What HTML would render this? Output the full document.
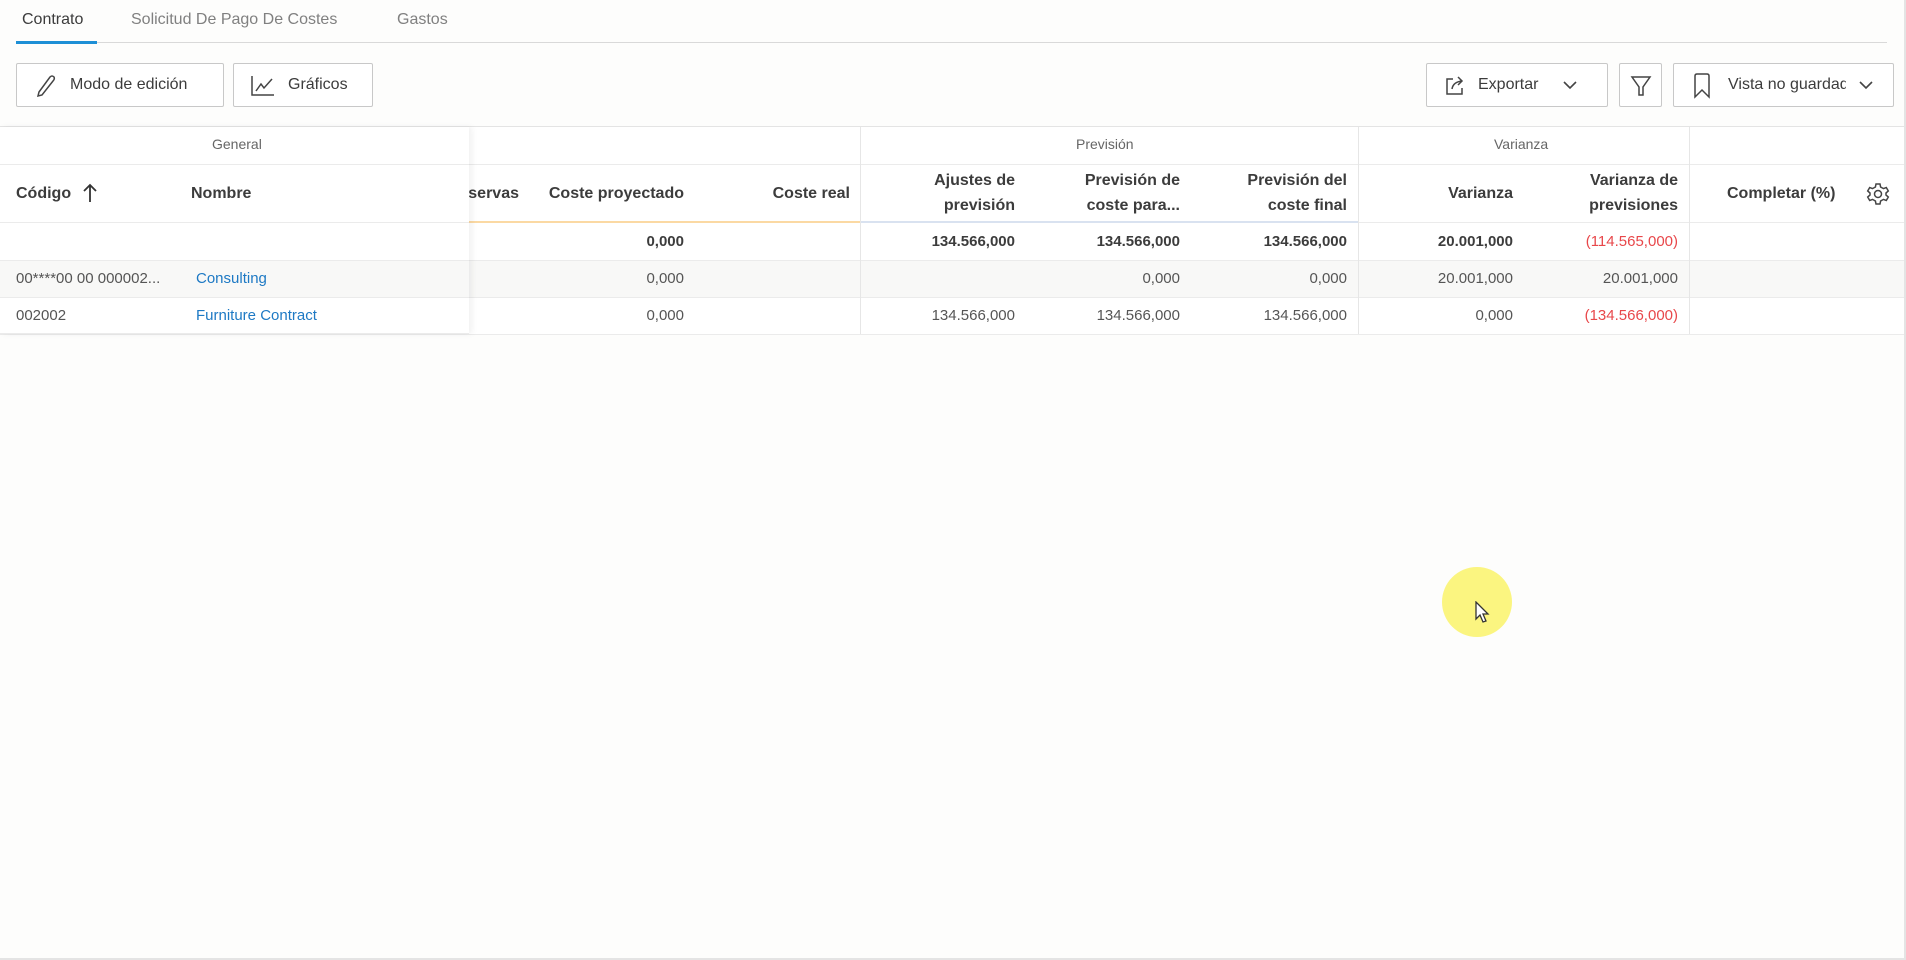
<!DOCTYPE html>
<html><head><meta charset="utf-8"><style>
*{box-sizing:border-box;margin:0;padding:0}
body{width:1906px;height:960px;background:#fdfdfc;font-family:"Liberation Sans",sans-serif;position:relative;overflow:hidden;color:#3c3c3c}
.a{position:absolute;white-space:nowrap}
.btn{position:absolute;top:63px;height:44px;border:1px solid #c8c8c8;background:#fff;border-radius:2px}
.btn span{position:absolute;top:12px;font-size:16px;color:#3c3c3c;white-space:nowrap}
.h{font-size:16px;font-weight:bold;color:#3c3c3c;text-align:right;line-height:25px}
.d{font-size:15px;color:#555;text-align:right}
.b{font-weight:bold;color:#3c3c3c}
.r{color:#e8474a}
.hl{position:absolute;height:1px;background:#ebebeb;left:0;width:1904px}
.vl{position:absolute;width:1px;background:#e6e6e6;top:127px;height:207px}
.g{font-size:14px;color:#666}
</style></head><body>
<!-- tabs -->
<div class="a" style="left:22px;top:11px;font-size:16px;color:#3c3c3c">Contrato</div>
<div class="a" style="left:131px;top:11px;font-size:16px;color:#808080">Solicitud De Pago De Costes</div>
<div class="a" style="left:397px;top:11px;font-size:16px;color:#808080">Gastos</div>
<div class="a" style="left:16px;top:42px;width:1871px;height:1px;background:#d9d9d9"></div>
<div class="a" style="left:16px;top:41px;width:81px;height:3px;background:#1d8fd6"></div>
<!-- buttons -->
<div class="btn" style="left:16px;width:208px">
<svg class="a" style="left:18px;top:10px" width="22" height="24" viewBox="0 0 22 24" fill="none" stroke="#444" stroke-width="1.5"><path d="M4 18 L15 3 Q17 1 19 3 Q20 5 18 7 L7 21 L3 22 Z"/></svg>
<span style="left:53px">Modo de edición</span></div>
<div class="btn" style="left:233px;width:140px">
<svg class="a" style="left:16px;top:10px" width="26" height="24" viewBox="0 0 26 24" fill="none" stroke="#444" stroke-width="1.5"><path d="M2 2 V21 H24"/><path d="M6 17 L11 10 L14 14 L22 5"/></svg>
<span style="left:54px">Gráficos</span></div>
<div class="btn" style="left:1426px;width:182px">
<svg class="a" style="left:16px;top:10px" width="24" height="24" viewBox="0 0 24 24" fill="none" stroke="#444" stroke-width="1.5"><path d="M10 5 H4 V20 H19 V14"/><path d="M9 15 Q10 8 19 7"/><path d="M15 3 L19 7 L15 11"/></svg>
<span style="left:51px">Exportar</span>
<svg class="a" style="left:136px;top:16px" width="14" height="10" viewBox="0 0 14 10" fill="none" stroke="#444" stroke-width="1.6"><path d="M1 2 L7 8 L13 2"/></svg></div>
<div class="btn" style="left:1619px;width:43px">
<svg class="a" style="left:10px;top:10px" width="22" height="24" viewBox="0 0 22 24" fill="none" stroke="#444" stroke-width="1.5"><path d="M2 3 H20 L13 13 V21 H9 V13 Z"/></svg></div>
<div class="btn" style="left:1673px;width:221px">
<svg class="a" style="left:18px;top:9px" width="20" height="26" viewBox="0 0 20 26" fill="none" stroke="#444" stroke-width="1.5"><path d="M3 3 Q3 1 5 1 H15 Q17 1 17 3 V24 L10 17 L3 24 Z"/></svg>
<span style="left:54px;width:118px;overflow:hidden">Vista no guardada</span>
<svg class="a" style="left:185px;top:16px" width="14" height="10" viewBox="0 0 14 10" fill="none" stroke="#444" stroke-width="1.6"><path d="M1 2 L7 8 L13 2"/></svg></div>
<!-- table -->
<div class="a" style="left:0;top:127px;width:1905px;height:207px;background:#fff"></div>
<div class="a" style="left:0;top:261px;width:1905px;height:36px;background:#f8f8f7"></div>
<div class="hl" style="top:126px;background:#e4e4e4"></div>
<div class="hl" style="top:164px"></div>
<div class="hl" style="top:222px"></div>
<div class="hl" style="top:260px"></div>
<div class="hl" style="top:297px"></div>
<div class="hl" style="top:334px"></div>
<div class="a" style="left:469px;top:221px;width:392px;height:2px;background:#fbd9a3"></div>
<div class="a" style="left:861px;top:221px;width:497px;height:2px;background:#d9e2f0"></div>
<div class="vl" style="left:860px"></div>
<div class="vl" style="left:1358px"></div>
<div class="vl" style="left:1689px"></div>
<div class="a g" style="left:1076px;top:136px">Previsión</div>
<div class="a g" style="left:1494px;top:136px">Varianza</div>
<div class="a h" style="right:1387px;top:181px">reservas</div>
<div class="a h" style="right:1222px;top:181px">Coste proyectado</div>
<div class="a h" style="right:1056px;top:181px">Coste real</div>
<div class="a h" style="right:891px;top:168px">Ajustes de<br>previsión</div>
<div class="a h" style="right:726px;top:168px">Previsión de<br>coste para...</div>
<div class="a h" style="right:559px;top:168px">Previsión del<br>coste final</div>
<div class="a h" style="right:393px;top:181px">Varianza</div>
<div class="a h" style="right:228px;top:168px">Varianza de<br>previsiones</div>
<div class="a h" style="left:1727px;top:181px">Completar (%)</div>
<svg class="a" style="left:1866px;top:182px" width="24" height="24" viewBox="0 0 24 24" fill="none" stroke="#444" stroke-width="1.5"><path d="M10 2 H14 L14.6 5 L17.5 6.6 L20.3 5.5 L22.3 9 L20 11 V13 L22.3 15 L20.3 18.5 L17.5 17.4 L14.6 19 L14 22 H10 L9.4 19 L6.5 17.4 L3.7 18.5 L1.7 15 L4 13 V11 L1.7 9 L3.7 5.5 L6.5 6.6 L9.4 5 Z"/><circle cx="12" cy="12" r="3.5"/></svg>
<!-- data -->
<div class="a d b" style="right:1222px;top:233px">0,000</div>
<div class="a d b" style="right:891px;top:233px">134.566,000</div>
<div class="a d b" style="right:726px;top:233px">134.566,000</div>
<div class="a d b" style="right:559px;top:233px">134.566,000</div>
<div class="a d b" style="right:393px;top:233px">20.001,000</div>
<div class="a d r" style="right:228px;top:233px">(114.565,000)</div>
<div class="a d" style="right:1222px;top:270px">0,000</div>
<div class="a d" style="right:726px;top:270px">0,000</div>
<div class="a d" style="right:559px;top:270px">0,000</div>
<div class="a d" style="right:393px;top:270px">20.001,000</div>
<div class="a d" style="right:228px;top:270px">20.001,000</div>
<div class="a d" style="right:1222px;top:307px">0,000</div>
<div class="a d" style="right:891px;top:307px">134.566,000</div>
<div class="a d" style="right:726px;top:307px">134.566,000</div>
<div class="a d" style="right:559px;top:307px">134.566,000</div>
<div class="a d" style="right:393px;top:307px">0,000</div>
<div class="a d r" style="right:228px;top:307px">(134.566,000)</div>
<!-- frozen left panel -->
<div class="a" style="left:0;top:127px;width:469px;height:207px;background:#fff;box-shadow:3px 0 6px rgba(0,0,0,0.06)">
<div class="a" style="left:0;top:37px;width:469px;height:1px;background:#ebebeb"></div>
<div class="a" style="left:0;top:95px;width:469px;height:1px;background:#ebebeb"></div>
<div class="a" style="left:0;top:133px;width:469px;height:1px;background:#ebebeb"></div>
<div class="a" style="left:0;top:134px;width:469px;height:36px;background:#f8f8f7"></div>
<div class="a" style="left:0;top:170px;width:469px;height:1px;background:#ebebeb"></div>
<div class="a" style="left:0;top:206px;width:469px;height:1px;background:#ebebeb"></div>
<div class="a g" style="left:212px;top:9px">General</div>
<div class="a h" style="left:16px;top:54px">Código</div>
<svg class="a" style="left:83px;top:56px" width="14" height="20" viewBox="0 0 14 20" fill="none" stroke="#333" stroke-width="1.8"><path d="M7 19 V2 M1 8 L7 2 L13 8"/></svg>
<div class="a h" style="left:191px;top:54px">Nombre</div>
<div class="a d" style="left:16px;top:143px;text-align:left">00****00 00 000002...</div>
<div class="a d" style="left:196px;top:143px;text-align:left;color:#1d79c4">Consulting</div>
<div class="a d" style="left:16px;top:180px;text-align:left">002002</div>
<div class="a d" style="left:196px;top:180px;text-align:left;color:#1d79c4">Furniture Contract</div>
</div>
<!-- borders -->
<div class="a" style="left:1904px;top:0;width:2px;height:960px;background:#e4e4e4"></div>
<div class="a" style="left:0;top:958px;width:1906px;height:2px;background:#e4e4e4"></div>
<!-- cursor highlight -->
<div class="a" style="left:1442px;top:567px;width:70px;height:70px;border-radius:50%;background:#fbf580"></div>
<svg class="a" style="left:1475px;top:601px" width="16" height="24" viewBox="0 0 16 24"><path d="M1 1 V18 L5 14 L8 21 L11 20 L8 13 L13 13 Z" fill="#fff" stroke="#333" stroke-width="1.3"/></svg>
</body></html>
